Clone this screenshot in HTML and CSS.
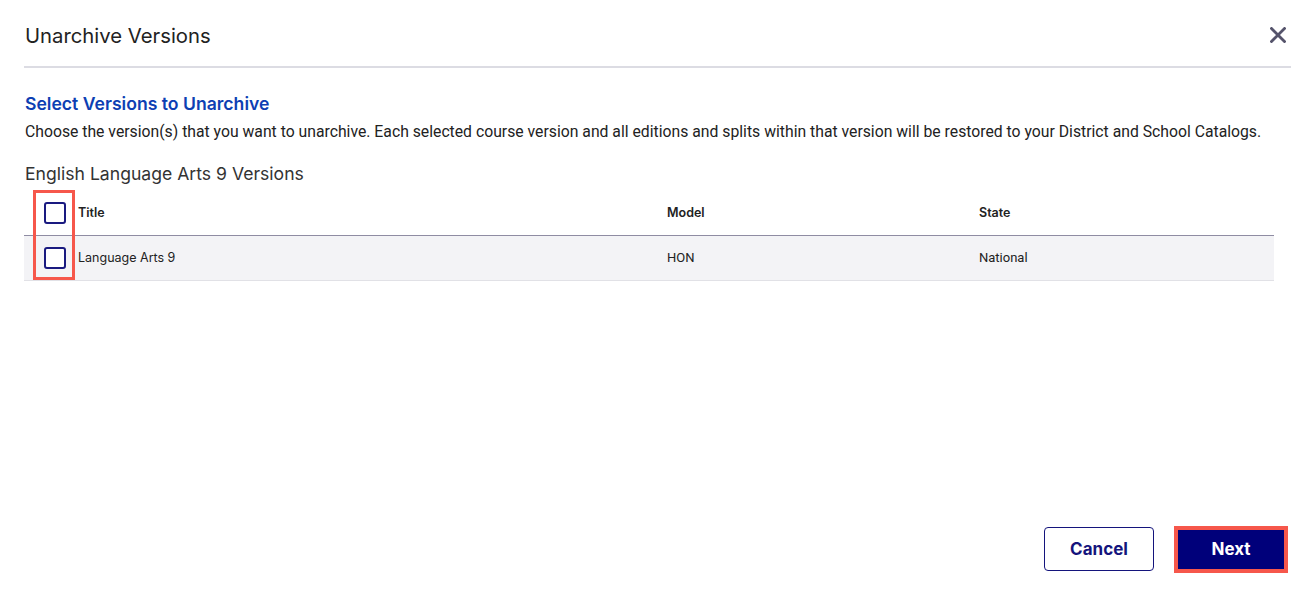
FILE: index.html
```html
<!DOCTYPE html>
<html lang="en">
<head>
<meta charset="utf-8">
<title>Unarchive Versions</title>
<link rel="stylesheet" href="styles.css">
</head>
<body>
<div class="modal">
  <header class="modal-header">
    <h1 class="modal-title">Unarchive Versions</h1>
    <button class="close-btn" aria-label="Close">
      <svg width="16" height="16" viewBox="0 0 16 16"><path d="M1.5 1.5 L14.5 14.5 M14.5 1.5 L1.5 14.5" stroke="#55536b" stroke-width="2.8" stroke-linecap="square"/></svg>
    </button>
  </header>
  <main class="modal-body">
    <h2 class="section-title">Select Versions to Unarchive</h2>
    <p class="description">Choose the version(s) that you want to unarchive. Each selected course version and all editions and splits within that version will be restored to your District and School Catalogs.</p>
    <h3 class="course-title">English Language Arts 9 Versions</h3>
    <div class="table">
      <div class="annot-checks"></div>
      <div class="row head">
        <div class="cell check"><span class="checkbox"></span></div>
        <div class="cell">Title</div>
        <div class="cell">Model</div>
        <div class="cell">State</div>
      </div>
      <div class="row body-row">
        <div class="cell check"><span class="checkbox"></span></div>
        <div class="cell inter">Language Arts 9</div>
        <div class="cell">HON</div>
        <div class="cell">National</div>
      </div>
    </div>
  </main>
  <footer class="modal-footer">
    <button class="btn btn-secondary">Cancel</button>
    <div class="next-wrap">
      <button class="btn btn-primary">Next</button>
      <div class="annot-next"></div>
    </div>
  </footer>
</div>
</body>
</html>
```

FILE: styles.css
```css
* { box-sizing: border-box; }
html, body { margin: 0; padding: 0; background: #fff; }
body { font-family: "Roboto", "Liberation Sans", sans-serif; color: #222; }

.modal {
  height: 100vh;
  display: flex;
  flex-direction: column;
  padding: 0 23px 0 24px;
}

.modal-header {
  height: 68px;
  display: flex;
  align-items: center;
  justify-content: space-between;
  border-bottom: 2px solid #dcdce3;
  padding-left: 1px;
}
.modal-title {
  margin: 0;
  font-family: "Inter", sans-serif;
  font-weight: 400;
  font-size: 20.3px;
  color: #222;
  position: relative;
  top: 2px;
}
.close-btn {
  border: 0;
  background: none;
  padding: 0;
  width: 16px;
  height: 16px;
  margin-right: 5px;
  position: relative;
  top: 2px;
  cursor: pointer;
}
.close-btn svg { display: block; }

.modal-body { padding-left: 1px; }

.section-title {
  margin: 25px 0 0;
  font-family: "Inter", sans-serif;
  font-weight: 600;
  font-size: 17.6px;
  line-height: 22px;
  color: #0d3fb3;
}
.description {
  margin: 6px 0 0;
  font-size: 15.75px;
  line-height: 21px;
  color: #222;
}
.course-title {
  margin: 21px 0 0;
  font-family: "Inter", sans-serif;
  font-weight: 400;
  font-size: 17.6px;
  line-height: 22px;
  color: #333;
}

.table {
  position: relative;
  width: 1250px;
  margin-left: -1px;
  margin-top: 5px;
}
.row {
  display: grid;
  grid-template-columns: 54px 589px 312px 1fr;
  align-items: center;
}
.row.head {
  height: 46px;
  border-bottom: 1px solid #8f8ca3;
  font-family: "Inter", sans-serif;
  font-weight: 600;
  font-size: 12.5px;
  color: #222;
}
.row.body-row {
  height: 45px;
  padding-bottom: 1px;
  background: #f3f3f6;
  border-bottom: 1px solid #e1e1e6;
  font-size: 13px;
  color: #222;
}
.cell.inter { font-family: "Inter", sans-serif; font-size: 12.5px; }
.cell.check { padding-left: 20px; display: flex; }
.checkbox {
  width: 22px;
  height: 22px;
  border: 2px solid #1a1a80;
  border-radius: 3px;
  background: #fff;
  display: block;
}

.annot-checks {
  position: absolute;
  left: 9px;
  top: 0;
  width: 42px;
  height: 90px;
  border: 3px solid #f6574b;
  pointer-events: none;
}

.modal-footer {
  margin-top: auto;
  display: flex;
  justify-content: flex-end;
  gap: 22px;
  padding: 0 5px 31px 0;
}
.btn {
  width: 110px;
  height: 44px;
  border-radius: 4px;
  font-family: "Inter", sans-serif;
  font-weight: 700;
  font-size: 17px;
  cursor: pointer;
}
.btn-secondary {
  background: #fff;
  border: 1px solid #14147c;
  color: #14147c;
}
.next-wrap { position: relative; }
.btn-primary {
  background: #00007a;
  border: 0;
  border-radius: 0;
  color: #fff;
  display: block;
}
.annot-next {
  position: absolute;
  left: -2px;
  top: -1px;
  width: 114px;
  height: 47px;
  border: 4px solid #f6574b;
  pointer-events: none;
}
```
